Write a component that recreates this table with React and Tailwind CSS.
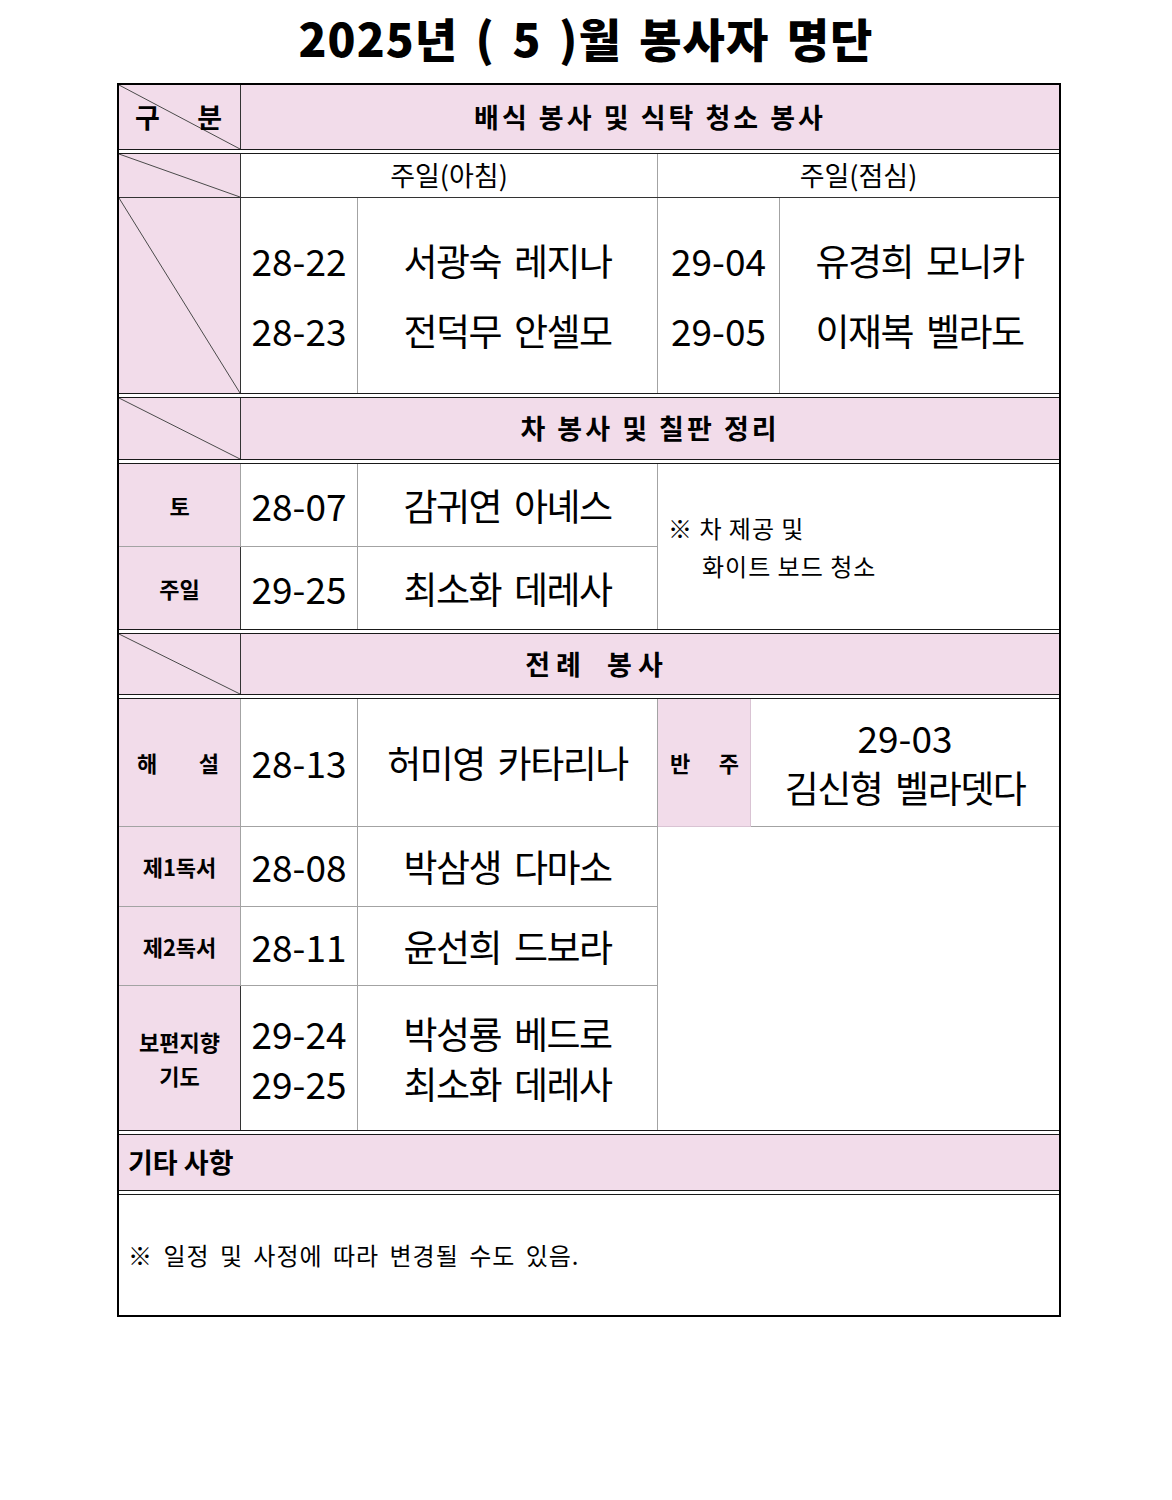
import React from "react";

const FONT = "font-['Noto_Sans_CJK_KR','Noto_Sans',sans-serif]";
const NUM = "font-['Noto_Sans_CJK_KR',sans-serif] text-[37px] leading-none";
const NAME = "font-['Noto_Sans_CJK_KR',sans-serif] text-[37px] leading-none tracking-[-1.5px] [word-spacing:6px]";
const PINK = "bg-[#f2dcea]";
const DARK = "border-[#333]";
const GRAY = "border-[#a3a3a3]";

function Diag({ className = "", children }) {
  return (
    <div className={`relative ${PINK} border-r ${DARK} ${className}`}>
      <svg className="absolute inset-0 h-full w-full" preserveAspectRatio="none">
        <line x1="0" y1="0" x2="100%" y2="100%" stroke="#4a4a4a" strokeWidth="1" />
      </svg>
      {children ? <div className="relative h-full w-full">{children}</div> : null}
    </div>
  );
}

function Sep() {
  return <div className="h-[5px] border-y-[1.5px] border-[#1a1a1a] bg-white" />;
}

function Num({ children }) {
  return <span className={NUM}>{children}</span>;
}

export default function App() {
  return (
    <div className={`${FONT} w-[1172px] min-h-[1500px] bg-white text-black`}>
      <div className="flex h-[83px] items-center justify-center pb-[10px]">
        <h1 className="text-[46px] font-black leading-none tracking-[1px] [word-spacing:6px]">
          2025년 ( 5 )월 봉사자 명단
        </h1>
      </div>

      <div className="ml-[117px] w-[944px] border-2 border-black">
        {/* Row A */}
        <div className="flex h-[64px]">
          <Diag className="w-[122px]">
            <div className="flex h-full items-center justify-between pl-[16px] pr-[18px] text-[27px] font-bold">
              <span>구</span>
              <span>분</span>
            </div>
          </Diag>
          <div className={`flex flex-1 items-center justify-center ${PINK} text-[27px] font-bold tracking-[3px]`}>
            배식 봉사 및 식탁 청소 봉사
          </div>
        </div>
        <Sep />

        {/* Row B */}
        <div className={`flex h-[44px] border-b ${DARK}`}>
          <Diag className="w-[122px]" />
          <div className={`flex w-[417px] items-center justify-center border-r ${GRAY} text-[27px]`}>
            주일(아침)
          </div>
          <div className="flex flex-1 items-center justify-center text-[27px]">주일(점심)</div>
        </div>

        {/* Row C */}
        <div className="flex h-[195px]">
          <Diag className="w-[122px]" />
          <div className={`flex w-[117px] flex-col items-center justify-center gap-[33px] border-r ${GRAY}`}>
            <Num>28-22</Num>
            <Num>28-23</Num>
          </div>
          <div className={`flex w-[300px] flex-col items-center justify-center gap-[33px] border-r ${GRAY}`}>
            <span className={NAME}>서광숙 레지나</span>
            <span className={NAME}>전덕무 안셀모</span>
          </div>
          <div className={`flex w-[122px] flex-col items-center justify-center gap-[33px] border-r ${GRAY}`}>
            <Num>29-04</Num>
            <Num>29-05</Num>
          </div>
          <div className="flex flex-1 flex-col items-center justify-center gap-[33px]">
            <span className={NAME}>유경희 모니카</span>
            <span className={NAME}>이재복 벨라도</span>
          </div>
        </div>
        <Sep />

        {/* Row D */}
        <div className="flex h-[61px]">
          <Diag className="w-[122px]" />
          <div className={`flex flex-1 items-center justify-center ${PINK} text-[27px] font-bold tracking-[3px]`}>
            차 봉사 및 칠판 정리
          </div>
        </div>
        <Sep />

        {/* Rows E-F */}
        <div className="grid grid-cols-[122px_117px_300px_1fr] grid-rows-[83px_82px]">
          <div className={`flex items-center justify-center ${PINK} border-r ${DARK} border-b ${GRAY} text-[22px] font-bold`}>
            토
          </div>
          <div className={`flex items-center justify-center border-r border-b ${GRAY}`}>
            <Num>28-07</Num>
          </div>
          <div className={`flex items-center justify-center border-r border-b ${GRAY}`}>
            <span className={NAME}>감귀연 아녜스</span>
          </div>
          <div className="row-span-2 flex flex-col justify-center gap-[8px] pl-[10px] text-[24px] leading-[30px] tracking-[1px]">
            <span>※ 차 제공 및</span>
            <span className="pl-[34px]">화이트 보드 청소</span>
          </div>
          <div className={`flex items-center justify-center ${PINK} border-r ${DARK} text-[22px] font-bold`}>
            주일
          </div>
          <div className={`flex items-center justify-center border-r ${GRAY}`}>
            <Num>29-25</Num>
          </div>
          <div className={`flex items-center justify-center border-r ${GRAY}`}>
            <span className={NAME}>최소화 데레사</span>
          </div>
        </div>
        <Sep />

        {/* Row G */}
        <div className="flex h-[60px]">
          <Diag className="w-[122px]" />
          <div className={`flex flex-1 items-center justify-center ${PINK} pr-[106px] text-[27px] font-bold tracking-[6px] [word-spacing:8px]`}>
            전례 봉사
          </div>
        </div>
        <Sep />

        {/* Rows H-K */}
        <div className="grid grid-cols-[122px_117px_300px_93px_1fr] grid-rows-[128px_80px_79px_144px]">
          <div className={`flex items-center justify-between ${PINK} border-r ${DARK} border-b ${GRAY} pl-[18px] pr-[21px] text-[22px] font-bold`}>
            <span>해</span>
            <span>설</span>
          </div>
          <div className={`flex items-center justify-center border-r border-b ${GRAY}`}>
            <Num>28-13</Num>
          </div>
          <div className={`flex items-center justify-center border-r border-b ${GRAY}`}>
            <span className={NAME}>허미영 카타리나</span>
          </div>
          <div className={`flex items-center justify-between ${PINK} border-r border-[#d9c3d3] border-b ${GRAY} pl-[12px] pr-[11px] text-[22px] font-bold`}>
            <span>반</span>
            <span>주</span>
          </div>
          <div className={`flex flex-col items-center justify-center gap-[13px] border-b ${GRAY}`}>
            <Num>29-03</Num>
            <span className={NAME}>김신형 벨라뎃다</span>
          </div>

          <div className={`flex items-center justify-center ${PINK} border-r ${DARK} border-b ${GRAY} text-[22px] font-bold`}>
            제1독서
          </div>
          <div className={`flex items-center justify-center border-r border-b ${GRAY}`}>
            <Num>28-08</Num>
          </div>
          <div className={`flex items-center justify-center border-r border-b ${GRAY}`}>
            <span className={NAME}>박삼생 다마소</span>
          </div>
          <div className="col-span-2 row-span-3" />

          <div className={`flex items-center justify-center ${PINK} border-r ${DARK} border-b ${GRAY} text-[22px] font-bold`}>
            제2독서
          </div>
          <div className={`flex items-center justify-center border-r border-b ${GRAY}`}>
            <Num>28-11</Num>
          </div>
          <div className={`flex items-center justify-center border-r border-b ${GRAY}`}>
            <span className={NAME}>윤선희 드보라</span>
          </div>

          <div className={`flex flex-col items-center justify-center ${PINK} border-r ${DARK} text-[22px] font-bold leading-[34px]`}>
            <span>보편지향</span>
            <span>기도</span>
          </div>
          <div className={`flex flex-col items-center justify-center gap-[13px] border-r ${GRAY}`}>
            <Num>29-24</Num>
            <Num>29-25</Num>
          </div>
          <div className={`flex flex-col items-center justify-center gap-[13px] border-r ${GRAY}`}>
            <span className={NAME}>박성룡 베드로</span>
            <span className={NAME}>최소화 데레사</span>
          </div>
        </div>
        <Sep />

        {/* Row L */}
        <div className={`flex h-[55px] items-center ${PINK} pl-[9px] text-[27px] font-bold`}>기타 사항</div>
        <Sep />

        {/* Row M */}
        <div className="flex h-[120px] items-center pl-[9px] text-[24px] tracking-[1px] [word-spacing:4px]">
          ※ 일정 및 사정에 따라 변경될 수도 있음.
        </div>
      </div>
    </div>
  );
}
